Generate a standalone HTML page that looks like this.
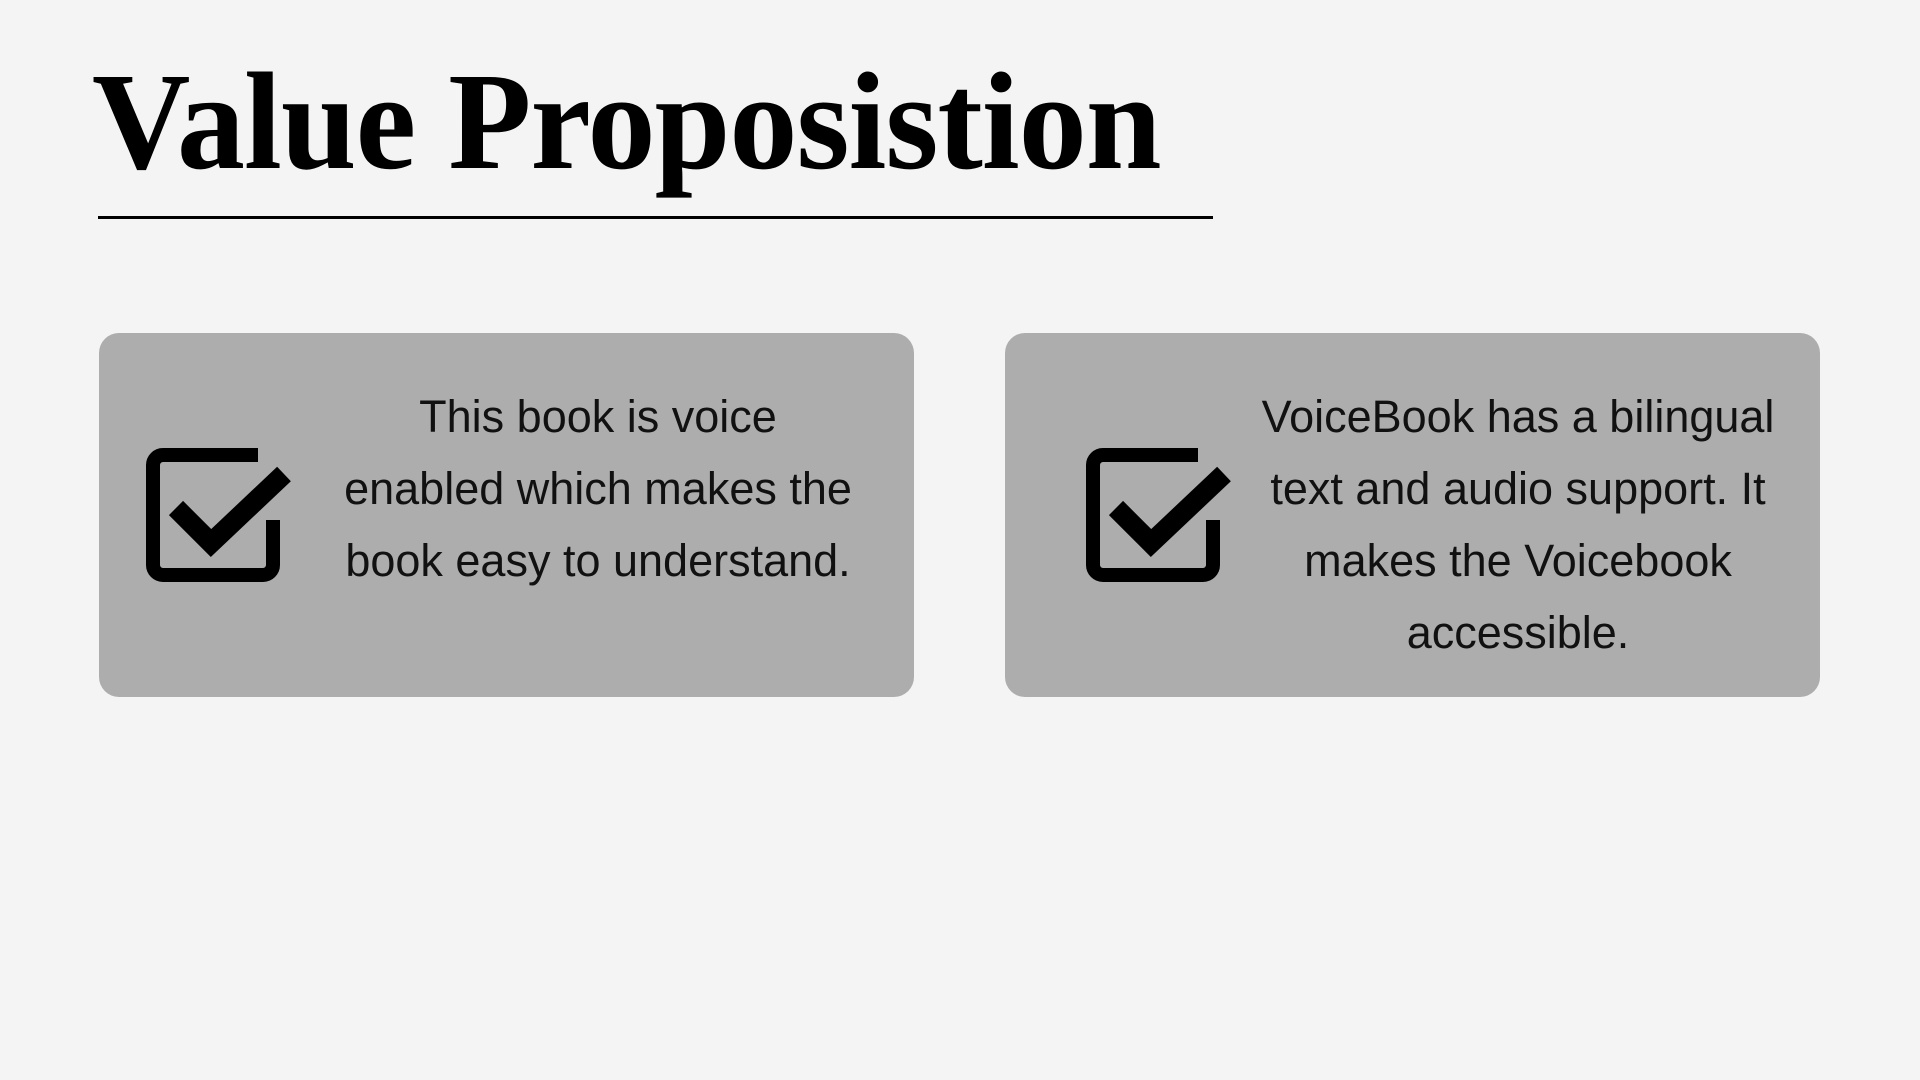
<!DOCTYPE html>
<html><head><meta charset="utf-8"><style>
html,body{margin:0;padding:0}
body{width:1920px;height:1080px;background:#f4f4f4;position:relative;overflow:hidden;font-family:"Liberation Sans",sans-serif}
.title{position:absolute;left:92px;top:53px;font-family:"Liberation Serif",serif;font-weight:bold;font-size:139px;line-height:1;color:#000;transform:scaleX(0.98);transform-origin:0 0;white-space:nowrap;letter-spacing:-1px}
.rule{position:absolute;left:98px;top:216px;width:1115px;height:3px;background:#000}
.box{position:absolute;top:333px;width:815px;height:364px;background:#adadad;border-radius:20px}
.txt{position:absolute;text-align:center;font-size:45px;line-height:72px;color:#111}
svg{position:absolute;overflow:visible}
</style></head><body>
<div class="title">Value Proposistion</div>
<div class="rule"></div>
<div class="box" style="left:99px"></div>
<div class="box" style="left:1005px"></div>
<svg style="left:146px;top:448px" width="134" height="134" viewBox="0 0 134 134"><path d="M112 7H17a10 10 0 0 0-10 10V117a10 10 0 0 0 10 10H117a10 10 0 0 0 10-10V72" fill="none" stroke="#000" stroke-width="14"/><path d="M30 60L65 95L138 26" fill="none" stroke="#000" stroke-width="20"/></svg>
<svg style="left:1086px;top:448px" width="134" height="134" viewBox="0 0 134 134"><path d="M112 7H17a10 10 0 0 0-10 10V117a10 10 0 0 0 10 10H117a10 10 0 0 0 10-10V72" fill="none" stroke="#000" stroke-width="14"/><path d="M30 60L65 95L138 26" fill="none" stroke="#000" stroke-width="20"/></svg>
<div class="txt" style="left:298px;width:600px;top:381px">This book is voice<br>enabled which makes the<br>book easy to understand.</div>
<div class="txt" style="left:1213px;width:610px;top:381px">VoiceBook has a bilingual<br>text and audio support. It<br>makes the Voicebook<br>accessible.</div>
</body></html>
